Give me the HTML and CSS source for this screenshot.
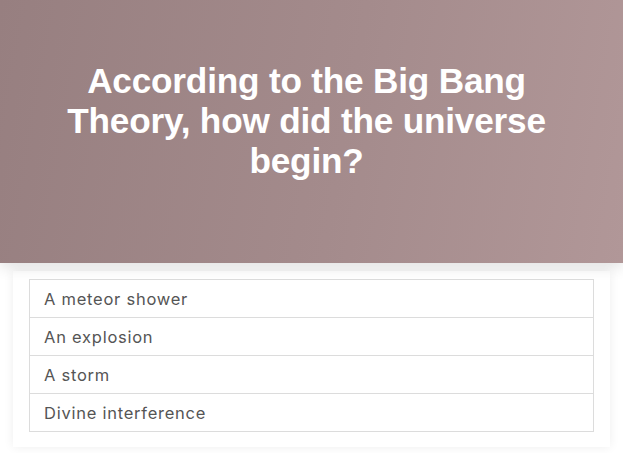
FILE: index.html
```html
<!DOCTYPE html>
<html>
<head>
<meta charset="utf-8">
<link rel="stylesheet" href="styles.css">
</head>
<body>
<header class="hero">
  <h1 class="question">According to the Big Bang Theory, how did the universe begin?</h1>
</header>
<section class="card">
  <ul class="answers">
    <li class="answer">A meteor shower</li>
    <li class="answer">An explosion</li>
    <li class="answer">A storm</li>
    <li class="answer">Divine interference</li>
  </ul>
</section>
</body>
</html>
```
FILE: styles.css
```css
html, body {
  margin: 0;
  padding: 0;
  background: #ffffff;
}
body {
  width: 623px;
  height: 453px;
  overflow: hidden;
}
.hero {
  height: 263px;
  box-sizing: border-box;
  padding: 0 10px 22px 0;
  background: linear-gradient(100deg, #977f80 0%, #a48b8c 55%, #b19798 100%);
  display: flex;
  align-items: center;
  justify-content: center;
  box-shadow: 0 4px 14px rgba(0,0,0,0.12);
  position: relative;
  z-index: 1;
}
.question {
  margin: 0;
  width: 530px;
  text-align: center;
  color: #ffffff;
  font-family: "Liberation Sans", Arial, sans-serif;
  font-weight: bold;
  font-size: 35.2px;
  line-height: 40px;
  letter-spacing: -0.2px;
}
.card {
  margin: 8px 13px 0 13px;
  width: 597px;
  height: 176px;
  box-sizing: border-box;
  padding: 8px 16px 0 16px;
  background: #ffffff;
  box-shadow: 0 0 10px rgba(0,0,0,0.07);
}
.answers {
  list-style: none;
  margin: 0;
  padding: 0;
  border: 1px solid #dcdcdc;
}
.answer {
  height: 37px;
  box-sizing: border-box;
  padding-left: 14px;
  display: flex;
  align-items: center;
  font-family: "Inter", "Lato", sans-serif;
  font-size: 16.5px;
  letter-spacing: 0.75px;
  color: #555555;
  border-top: 1px solid #dcdcdc;
}
.answer:first-child {
  border-top: none;
}
.answer + .answer {
  height: 38px;
}
```
